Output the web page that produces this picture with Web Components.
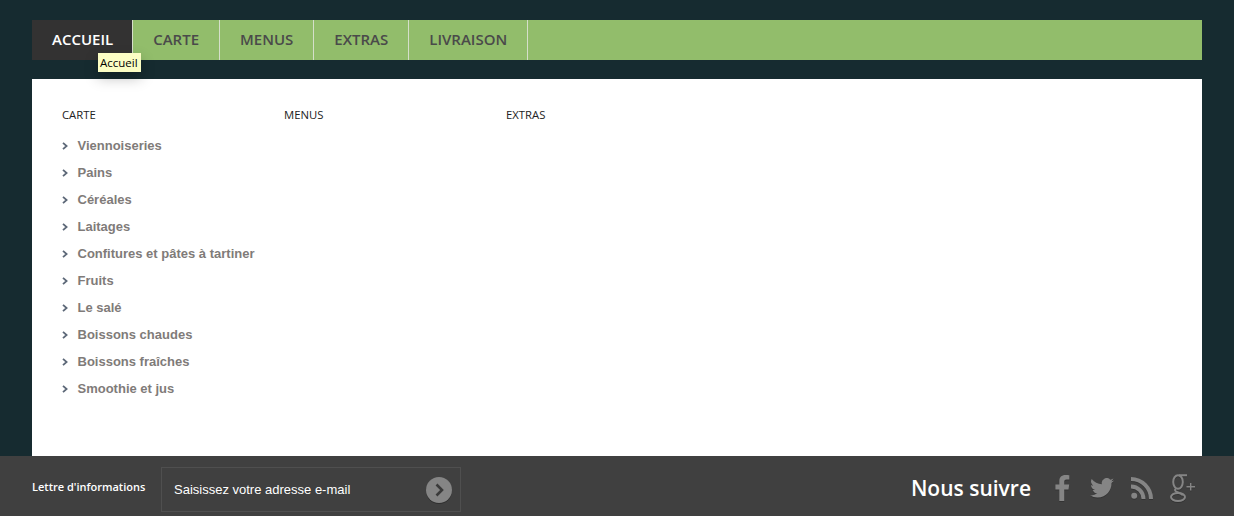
<!DOCTYPE html>
<html lang="fr">
<head>
<meta charset="utf-8">
<title>Accueil</title>
<style>
	html, body { margin: 0; height: 100%; }
	body {
		background: #162b30;
		font-family: "Open Sans", "Liberation Sans", sans-serif;
		overflow: hidden;
	}
	#page { height: 516px; display: flex; flex-direction: column; }
</style>
</head>
<body>
<div id="page">
	<main-nav>
		<nav-item active tip="Accueil">ACCUEIL</nav-item>
		<nav-item>CARTE</nav-item>
		<nav-item>MENUS</nav-item>
		<nav-item>EXTRAS</nav-item>
		<nav-item>LIVRAISON</nav-item>
	</main-nav>
	<menu-panel>
		<menu-column title="CARTE">
			<menu-link>Viennoiseries</menu-link>
			<menu-link>Pains</menu-link>
			<menu-link>Céréales</menu-link>
			<menu-link>Laitages</menu-link>
			<menu-link>Confitures et pâtes à tartiner</menu-link>
			<menu-link>Fruits</menu-link>
			<menu-link>Le salé</menu-link>
			<menu-link>Boissons chaudes</menu-link>
			<menu-link>Boissons fraîches</menu-link>
			<menu-link>Smoothie et jus</menu-link>
		</menu-column>
		<menu-column title="MENUS"></menu-column>
		<menu-column title="EXTRAS"></menu-column>
	</menu-panel>
	<site-footer></site-footer>
</div>

<script>
/**
 * Green navigation bar.
 */
class MainNav extends HTMLElement {
	constructor() {
		super();
		this.attachShadow({ mode: 'open' });
	}

	connectedCallback() {
		this.shadowRoot.innerHTML = `
    <style>
        :host {
          display: flex;
          flex: none;
          height: 40px;
          margin: 20px 32px 0;
          background: #92bd6b;
        }
    </style>
    <slot></slot>
    `;
	}
}

/**
 * One entry of the navigation bar, with an optional tooltip.
 */
class NavItem extends HTMLElement {
	constructor() {
		super();
		this.attachShadow({ mode: 'open' });
	}

	connectedCallback() {
		const tip = this.getAttribute('tip');
		this.shadowRoot.innerHTML = `
    <style>
        :host {
          display: block;
          position: relative;
          padding: 0 20px;
          border-right: 1px solid #d5dfca;
          font-size: 15px;
          font-weight: 600;
          line-height: 39px;
          color: #4a4a4a;
        }
        :host([active]) {
          background: #333232;
          color: #fff;
          padding-right: 19px;
        }
        .tip {
          position: absolute;
          left: 66px;
          top: 33px;
          padding: 0 3px 0 2px;
          height: 19px;
          background: #fbfdc4;
          color: #000;
          font-size: 11.500px;
          font-weight: 400;
          line-height: 19px;
          box-shadow: 0 6px 14px rgba(0, 0, 0, .25);
          white-space: nowrap;
          z-index: 2;
        }
    </style>
    <slot></slot>
    ${tip ? `<span class="tip">${tip}</span>` : ''}
    `;
	}
}

/**
 * White panel holding the menu columns.
 */
class MenuPanel extends HTMLElement {
	constructor() {
		super();
		this.attachShadow({ mode: 'open' });
	}

	connectedCallback() {
		this.shadowRoot.innerHTML = `
    <style>
        :host {
          display: grid;
          grid-template-columns: repeat(5, 222px);
          flex: 1;
          margin: 19px 32px 0;
          padding: 28px 30px 0;
          background: #fff;
          align-items: start;
        }
    </style>
    <slot></slot>
    `;
	}
}

/**
 * Column of the panel: a small title and its links.
 */
class MenuColumn extends HTMLElement {
	constructor() {
		super();
		this.attachShadow({ mode: 'open' });
	}

	connectedCallback() {
		this.shadowRoot.innerHTML = `
    <style>
        :host { display: block; }
        h3 {
          margin: 0 0 9px;
          font-size: 11.300px;
          font-weight: 400;
          line-height: 16px;
          color: #222;
        }
    </style>
    <h3>${this.getAttribute('title')}</h3>
    <slot></slot>
    `;
	}
}

/**
 * Link with a chevron in front of it.
 */
class MenuLink extends HTMLElement {
	constructor() {
		super();
		this.attachShadow({ mode: 'open' });
	}

	connectedCallback() {
		this.shadowRoot.innerHTML = `
    <style>
        :host {
          display: flex;
          align-items: center;
          height: 27px;
          font-family: "Liberation Sans", Arial, sans-serif;
          font-size: 13px;
          font-weight: 700;
          color: #7f7b79;
          white-space: nowrap;
        }
        svg { flex: none; margin-right: 9px; }
    </style>
    <svg width="6.500" height="8" viewBox="0 0 6.500 8"><path d="M1 .8l3.600 3.200-3.600 3.200" fill="none" stroke="#5d6878" stroke-width="1.800"/></svg>
    <slot></slot>
    `;
	}
}

/**
 * Bottom bar: newsletter form and social icons.
 */
class SiteFooter extends HTMLElement {
	constructor() {
		super();
		this.attachShadow({ mode: 'open' });
	}

	connectedCallback() {
		this.shadowRoot.innerHTML = `
    <style>
        :host {
          display: flex;
          flex: none;
          align-items: center;
          box-sizing: border-box;
          height: 60px;
          padding: 7px 32px 0;
          background: #404040;
          color: #fff;
        }
        .label {
          width: 129px;
          font-size: 11px;
          font-weight: 600;
          margin-top: -6px;
        }
        .field {
          display: flex;
          align-items: center;
          justify-content: space-between;
          box-sizing: border-box;
          width: 300px;
          height: 45px;
          padding: 0 8px 0 12px;
          border: 1px solid #4f4f4f;
          font-family: "Liberation Sans", Arial, sans-serif;
          font-size: 13px;
        }
        .go { display: block; filter: drop-shadow(0 1px 0 #2e2e2e); }
        .follow {
          margin: -3px 24px 0 auto;
          font-size: 21px;
          font-weight: 600;
        }
        .social { display: flex; align-items: center; margin: -3px 7px 0 0; }
        .social svg { display: block; fill: #858585; filter: drop-shadow(0 1px 0 #333); }
        .tw { margin: 0 17px 0 20px; }
        .rss { margin-right: 17px; }
    </style>
    <span class="label">Lettre d'informations</span>
    <div class="field">
      <span>Saisissez votre adresse e-mail</span>
      <svg class="go" width="26" height="26" viewBox="0 0 26 26"><circle cx="13" cy="13" r="13" fill="#858585"/><path d="M10.500 7.500l5.500 5.500-5.500 5.500" fill="none" stroke="#3a3a3a" stroke-width="2.600"/></svg>
    </div>
    <span class="follow">Nous suivre</span>
    <div class="social">
      <svg width="15" height="26" viewBox="0 0 15 26"><path d="M4.300 26V14.500H.4V9.500h3.900V6.200C4.300 2.200 6.700 0 10.400 0c1.800 0 3.400.1 3.900.2v4.400h-2.700c-2 0-2.400 1-2.400 2.400v2.500h5l-.7 5H9.200V26z"/></svg>
      <svg class="tw" width="24" height="20" viewBox="0 0 24 20"><path d="M24 2.400c-.9.400-1.800.7-2.800.8 1-.6 1.800-1.600 2.200-2.700-1 .6-2 1-3.100 1.200A4.900 4.900 0 0 0 11.900 6.200 14 14 0 0 1 1.700.9a4.900 4.900 0 0 0 1.500 6.600c-.8 0-1.600-.2-2.200-.6v.1c0 2.400 1.700 4.400 3.900 4.800-.7.200-1.500.2-2.200.1.600 2 2.400 3.400 4.600 3.400A9.900 9.900 0 0 1 0 17.300 14 14 0 0 0 7.500 19.500c9.100 0 14-7.500 14-14v-.6c1-.7 1.800-1.500 2.500-2.500z"/></svg>
      <svg class="rss" width="22" height="22" viewBox="0 0 22 22"><circle cx="3.200" cy="18.800" r="3"/><path d="M0 7.500v4a10.500 10.500 0 0 1 10.500 10.500h4A14.500 14.500 0 0 0 0 7.500z"/><path d="M0 0v4a18 18 0 0 1 18 18h4A22 22 0 0 0 0 0z"/></svg>
      <svg width="25" height="28" viewBox="0 0 25 28"><g fill="none" stroke="#858585" stroke-width="2"><ellipse cx="8" cy="8" rx="4.800" ry="6.800"/><ellipse cx="8" cy="23" rx="7" ry="4"/><path d="M6 14.500c-1.600 1-1.200 2.400.4 3.200 2.800 1.300 5.600 1.700 6.400 3.800M9 1.200h8"/></g><path d="M20 9h1.400v3H25v1.400h-3.600v3H20v-3h-3.500V12H20z"/></svg>
    </div>
    `;
	}
}

window.customElements.define('main-nav', MainNav);
window.customElements.define('nav-item', NavItem);
window.customElements.define('menu-panel', MenuPanel);
window.customElements.define('menu-column', MenuColumn);
window.customElements.define('menu-link', MenuLink);
window.customElements.define('site-footer', SiteFooter);
</script>
</body>
</html>
